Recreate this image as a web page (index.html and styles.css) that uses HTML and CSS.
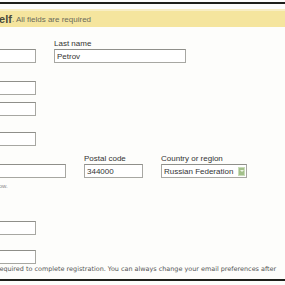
FILE: index.html
```html
<!DOCTYPE html>
<html lang="en">
<head>
  <meta charset="UTF-8" />
  <title>Tell us about yourself</title>
  <link rel="stylesheet" href="styles.css">
</head>
<body>
  <div class="dialog">
    <div class="head">
      <h1>Tell us about yourself</h1>
      <span class="sub">. All fields are required</span>
    </div>

    <form class="fields">
      <div class="row row-first">
        <div class="field">
          <label>First name</label>
          <input type="text" class="wide">
        </div>
        <div class="field">
          <label>Last name</label>
          <input type="text" class="wide" value="Petrov">
        </div>
      </div>

      <div class="row row-label">
        <div class="field">
          <label>Street address</label>
          <input type="text" class="wide">
        </div>
      </div>

      <div class="row row-plain">
        <div class="field">
          <input type="text" class="wide">
        </div>
      </div>

      <div class="row row-label-tight">
        <div class="field">
          <label>Apartment or suite</label>
          <input type="text" class="wide">
        </div>
      </div>

      <div class="row row-label-city">
        <div class="field">
          <label>City</label>
          <input type="text" class="city">
          <div class="hint">For example: Rostov-on-Don, Moscow.</div>
        </div>
        <div class="field">
          <label>Postal code</label>
          <input type="text" class="postal" value="344000">
        </div>
        <div class="field">
          <label>Country or region</label>
          <div class="select">
            <span>Russian Federation</span>
            <i class="arrow"></i>
          </div>
        </div>
      </div>

      <div class="row row-phone">
        <div class="field">
          <label>Phone number</label>
          <input type="text" class="wide">
        </div>
      </div>

      <div class="row row-last">
        <div class="field">
          <label>Alternate e-mail address</label>
          <input type="text" class="wide">
        </div>
      </div>
    </form>

    <p class="note">Your e-mail address is required to complete registration. You can always change your email preferences after</p>
  </div>
</body>
</html>
```

FILE: styles.css
```css
html {
  overflow: hidden;
}

body {
  margin: 0;
  padding-top: 2px;
  width: 285px;
  height: 285px;
  overflow: hidden;
  background: #fdfdfb;
  font-family: 'Liberation Sans', Arial, sans-serif;
  color: #333;
}

.dialog {
  margin-left: -120px;
  width: 405px;
  border-top: 2px solid #1e1f1a;
  border-bottom: 2px solid #1e1f1a;
}

.head {
  margin-top: 5px;
  height: 16px;
  padding-left: 19px;
  background: #f5e59e;
  border-top: 2px solid #f8eec4;
  display: flex;
  align-items: center;
}

.head h1 {
  margin: 0;
  font-size: 11px;
  font-weight: bold;
  color: #4a4a3a;
}

.sub {
  font-size: 8px;
  color: #6a6a5a;
}

.fields {
  padding-left: 24px;
}

.row {
  display: flex;
  gap: 18px;
  align-items: flex-start;
}

.row-first { margin-top: 12px; }
.row-label { margin-top: 8px; }
.row-plain { margin-top: 7px; }
.row-label-tight { margin-top: 6px; }
.row-label-city { margin-top: 8px; }
.row-phone { margin-top: 20px; }
.row-last { margin-top: 5px; }

label {
  display: block;
  font-size: 8px;
  line-height: 9px;
  margin-bottom: 1px;
  color: #333;
  white-space: nowrap;
}

input, .select {
  box-sizing: border-box;
  height: 14px;
  border: 1px solid #a7a7a2;
  border-top-color: #8f8f8a;
  background: #fff;
  font-family: 'Liberation Sans', Arial, sans-serif;
  font-size: 8px;
  color: #333;
  padding: 0 2px;
  margin: 0;
  display: block;
}

.wide { width: 132px; }
.city { width: 162px; }
.postal { width: 59px; }

.hint {
  font-size: 6px;
  line-height: 9px;
  margin-top: 4px;
  color: #888;
  white-space: nowrap;
}

.select {
  width: 86px;
  display: flex;
  align-items: center;
  justify-content: space-between;
  padding: 0 1px 0 2px;
  white-space: nowrap;
}

.arrow {
  width: 7px;
  height: 9px;
  background: #a3c08b;
  border: 1px solid #c9dcb9;
  box-sizing: border-box;
  position: relative;
}

.arrow::after {
  content: "";
  position: absolute;
  left: 1px;
  top: 2px;
  border-left: 2px solid transparent;
  border-right: 2px solid transparent;
  border-top: 2px solid #eef5e6;
}

.note {
  margin: 1px 0 5px 0;
  padding-left: 44.5px;
  font-family: 'DejaVu Sans', Verdana, sans-serif;
  font-size: 6.45px;
  line-height: 9px;
  color: #555;
  white-space: nowrap;
}
```
